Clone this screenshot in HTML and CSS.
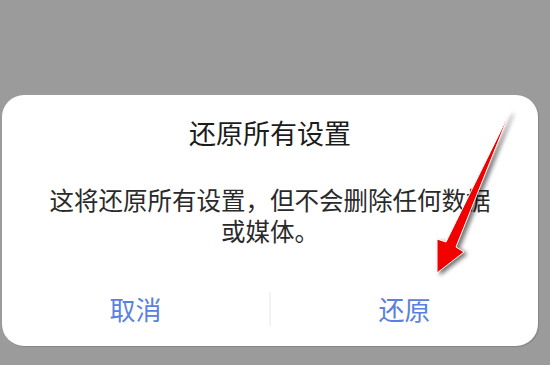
FILE: index.html
```html
<!DOCTYPE html>
<html lang="zh-CN">
<head>
<meta charset="utf-8">
<link rel="stylesheet" href="styles.css">
</head>
<body>
<div class="dialog">
  <div class="title">还原所有设置</div>
  <div class="message">这将还原所有设置，但不会删除任何数据或媒体。</div>
  <div class="actions">
    <div class="btn">取消</div>
    <div class="sep"></div>
    <div class="btn">还原</div>
  </div>
</div>
<svg class="arrow" width="550" height="365" viewBox="0 0 550 365">
  <polygon points="510,112 456,247 464,252 437,273 437,239 446,242" fill="#f20000" stroke="#ffffff" stroke-width="1" stroke-linejoin="round"/>
</svg>
</body>
</html>
```
FILE: styles.css
```css
html, body {
  margin: 0;
  padding: 0;
}
body {
  width: 550px;
  height: 365px;
  background: #9b9b9b;
  font-family: "Noto Sans CJK SC", "Noto Sans", sans-serif;
  position: relative;
  overflow: hidden;
}
.dialog {
  margin: 95px 0 0 2px;
  width: 536px;
  height: 251px;
  background: #ffffff;
  border-radius: 22px;
  display: flex;
  flex-direction: column;
  align-items: center;
  box-shadow: 1px 1px 1px rgba(0,0,0,0.15);
}
.title {
  margin-top: 20px;
  font-size: 27px;
  line-height: 36px;
  color: #1c1c1c;
  font-weight: 400;
}
.message {
  margin-top: 33px;
  width: 442px;
  font-size: 24.5px;
  line-height: 31px;
  color: #2a2a2a;
  text-align: center;
}
.actions {
  margin-top: 36px;
  width: 100%;
  height: 54px;
  display: flex;
  align-items: center;
}
.btn {
  flex: 1;
  text-align: center;
  font-size: 26px;
  line-height: 54px;
  color: #5a80e0;
}
.sep {
  width: 2px;
  height: 34px;
  background: #f2f2f2;
}
.arrow {
  position: absolute;
  left: 0;
  top: 0;
  filter: drop-shadow(3px 2px 2px rgba(0,0,0,0.55));
}
```
